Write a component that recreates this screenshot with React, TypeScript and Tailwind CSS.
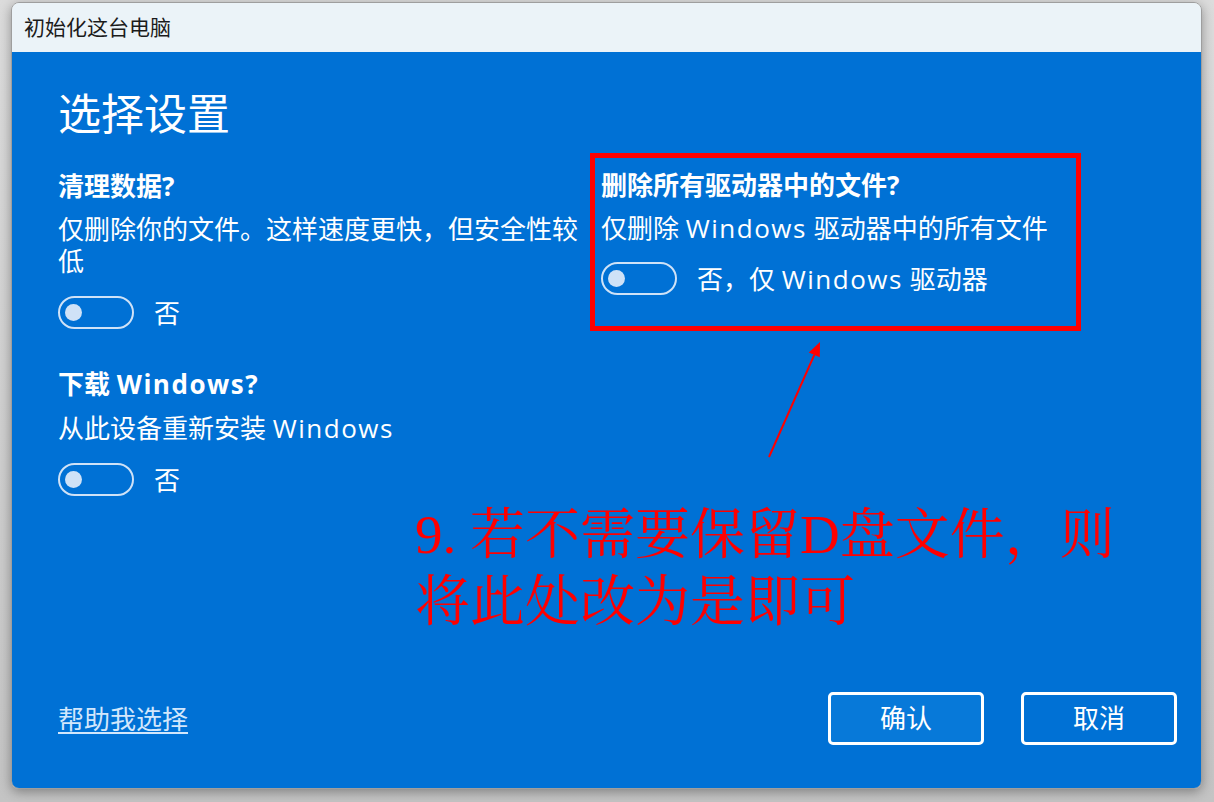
import React from 'react';

const sans = { fontFamily: '"Open Sans", "Noto Sans CJK SC", sans-serif' };

// Latin word spaced a little wider, closer to Segoe UI widths
const Win: React.FC = () => <span className="tracking-[1.5px]">Windows</span>;

const Toggle: React.FC<{ children: React.ReactNode }> = ({ children }) => (
    <div className="flex items-center gap-[20px]">
        <div className="flex h-[33px] w-[76px] items-center rounded-full border-2 border-[#cfe2f7] pl-[5px]">
            <div className="h-[17px] w-[17px] rounded-full bg-[#cfe2f7]" />
        </div>
        <span className="text-[26px] leading-[32px] text-white">{children}</span>
    </div>
);

const App: React.FC = () => {
    return (
        <div
            className="h-[802px] w-[1214px] overflow-hidden bg-gradient-to-b from-[#dcdcdc] to-[#c4c4c4] pl-[11px] pt-[2px]"
            style={sans}
        >
            <div className="flex h-[787px] w-[1191px] flex-col overflow-hidden rounded-[8px] border border-[#9e9e9e] shadow-[0_3px_12px_rgba(0,0,0,0.35)]">
                {/* title bar */}
                <div className="flex h-[49px] shrink-0 items-center bg-[#ebf3f8] pl-[12px]">
                    <span className="text-[21px] leading-none text-[#1b1b1b]">初始化这台电脑</span>
                </div>

                {/* main panel */}
                <div className="relative flex flex-1 flex-col bg-[#0071d5] pl-[46px] pt-[34px]">
                    <h1 className="text-[43px] font-normal leading-[56px] text-white">选择设置</h1>

                    <div className="mt-[11px] grid grid-cols-[532px_491px]">
                        {/* left column */}
                        <div className="pt-[17px]">
                            <div className="text-[26px] font-bold leading-[32px] text-white">清理数据?</div>
                            <p className="mt-[11px] w-[530px] text-[26px] leading-[32px] text-white">
                                仅删除你的文件。这样速度更快，但安全性较低
                            </p>
                            <div className="mt-[19px]">
                                <Toggle>否</Toggle>
                            </div>

                            <div className="mt-[39px] text-[26px] font-bold leading-[32px] text-white">
                                下载 <Win />?
                            </div>
                            <p className="mt-[12px] text-[26px] leading-[32px] text-white">
                                从此设备重新安装 <Win />
                            </p>
                            <div className="mt-[19px]">
                                <Toggle>否</Toggle>
                            </div>
                        </div>

                        {/* right column, highlighted */}
                        <div className="h-[178px] border-[5px] border-[#ff0000] pl-[6px] pt-[11px]">
                            <div className="text-[26px] font-bold leading-[32px] text-white">删除所有驱动器中的文件?</div>
                            <p className="mt-[11px] text-[26px] leading-[32px] text-white">
                                仅删除 <Win /> 驱动器中的所有文件
                            </p>
                            <div className="mt-[18px]">
                                <Toggle>
                                    否，仅 <Win /> 驱动器
                                </Toggle>
                            </div>
                        </div>
                    </div>

                    {/* annotation */}
                    <div
                        className="ml-[357px] mt-[5px] text-[55px] leading-[67px] text-[#ff0000]"
                        style={{ fontFamily: '"Liberation Serif", "Noto Serif CJK SC", "Noto Sans CJK SC", serif' }}
                    >
                        9. 若不需要保留D盘文件，则
                        <br />
                        将此处改为是即可
                    </div>

                    <svg
                        className="absolute left-[752px] top-[280px]"
                        width="80"
                        height="190"
                        viewBox="0 0 80 190"
                    >
                        <line x1="5" y1="125" x2="50.3" y2="22.8" stroke="#ff0000" strokeWidth="2" />
                        <polygon points="56,10 55.8,25.2 44.8,20.4" fill="#ff0000" />
                    </svg>

                    {/* footer */}
                    <div className="mt-auto flex items-center justify-between pb-[43px] pr-[24px]">
                        <a className="text-[26px] leading-[32px] text-[#d2e7fc] underline underline-offset-[3px]">
                            帮助我选择
                        </a>
                        <div className="flex gap-[37px]">
                            <button className="flex h-[53px] w-[156px] items-center justify-center rounded-[5px] border-[3px] border-white bg-[#0779d9] text-[26px] text-white">
                                确认
                            </button>
                            <button className="flex h-[53px] w-[156px] items-center justify-center rounded-[5px] border-[3px] border-white text-[26px] text-white">
                                取消
                            </button>
                        </div>
                    </div>
                </div>
            </div>
        </div>
    );
};

export default App;
